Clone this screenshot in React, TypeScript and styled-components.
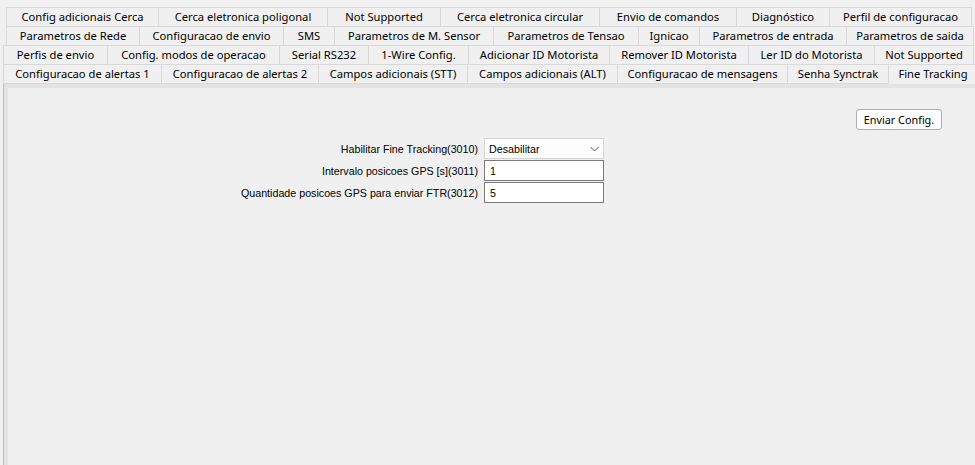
import React from "react";
import styled, { createGlobalStyle } from "styled-components";

const Global = createGlobalStyle`
  html, body { margin: 0; padding: 0; background: #f0f0f0; }
  body { width: 975px; height: 465px; overflow: hidden; }
  * { box-sizing: border-box; }
`;

const Frame = styled.div`
  width: 975px;
  height: 465px;
  display: flex;
  flex-direction: column;
  padding-top: 7px;
  background: #f0f0f0;
`;

const TabRow = styled.div<{ $indent: number }>`
  display: flex;
  height: 20px;
  padding-left: ${(p) => p.$indent}px;
  & + & { margin-top: -1px; }
`;

const Tab = styled.div<{ $w: number; $selected?: boolean }>`
  flex: 0 0 ${(p) => p.$w}px;
  height: 20px;
  margin-left: -1px;
  &:first-child { margin-left: 0; }
  border: 1px solid #d9d9d9;
  border-bottom-color: ${(p) => (p.$selected ? "#f0f0f0" : "#d9d9d9")};
  background: #f0f0f0;
  display: flex;
  align-items: center;
  justify-content: center;
  padding-bottom: 1px;
  font-family: "Segoe UI", "Noto Sans", sans-serif;
  font-size: 11.2px;
  color: #000;
  white-space: nowrap;
  overflow: hidden;
`;

const Panel = styled.div`
  flex: 1;
  margin-left: 3px;
  border-left: 1px solid #bdbdbd;
  display: flex;
`;

const PanelInner = styled.div`
  flex: 1;
  border-left: 4px solid #e3e3e3;
  border-top: 4px solid #e3e3e3;
  background: #f0f0f0;
  display: flex;
  flex-direction: column;
  padding-top: 21px;
`;

const ButtonBar = styled.div`
  display: flex;
  justify-content: flex-end;
  padding-right: 33px;
`;

const Button = styled.button`
  width: 86px;
  height: 21px;
  padding: 0;
  border: 1px solid #adadad;
  border-radius: 3px;
  background: #fdfdfd;
  font-family: "Segoe UI", "Noto Sans", sans-serif;
  font-size: 10.8px;
  color: #000;
`;

const Form = styled.div`
  margin-top: 8px;
  display: grid;
  grid-template-columns: 470px 120px;
  grid-auto-rows: 21px;
  column-gap: 6px;
  row-gap: 1px;
`;

const Label = styled.label`
  display: flex;
  align-items: center;
  justify-content: flex-end;
  font-family: "Liberation Sans", Arial, sans-serif;
  font-size: 10.7px;
  color: #000;
  white-space: nowrap;
`;

const Combo = styled.div`
  display: flex;
  align-items: center;
  justify-content: space-between;
  border: 1px solid #d4d4d4;
  background: #fdfdfd;
  padding: 0 4px 0 4px;
  font-family: "Liberation Sans", Arial, sans-serif;
  font-size: 10.7px;
  color: #000;
`;

const Field = styled.div`
  display: flex;
  align-items: center;
  border: 1px solid #7a7a7a;
  background: #fff;
  padding: 0 5px;
  font-family: "Liberation Sans", Arial, sans-serif;
  font-size: 10.7px;
  color: #000;
`;

type TabDef = { label: string; w: number; selected?: boolean };

const rows: { indent: number; tabs: TabDef[] }[] = [
  {
    indent: 6,
    tabs: [
      { label: "Config adicionais Cerca", w: 153 },
      { label: "Cerca eletronica poligonal", w: 170 },
      { label: "Not Supported", w: 114 },
      { label: "Cerca eletronica circular", w: 160 },
      { label: "Envio de comandos", w: 138 },
      { label: "Diagnóstico", w: 94 },
      { label: "Perfil de configuracao", w: 143 },
    ],
  },
  {
    indent: 6,
    tabs: [
      { label: "Parametros de Rede", w: 134 },
      { label: "Configuracao de envio", w: 145 },
      { label: "SMS", w: 52 },
      { label: "Parametros de M. Sensor", w: 160 },
      { label: "Parametros de Tensao", w: 146 },
      { label: "Ignicao", w: 62 },
      { label: "Parametros de entrada", w: 148 },
      { label: "Parametros de saida", w: 128 },
    ],
  },
  {
    indent: 3,
    tabs: [
      { label: "Perfis de envio", w: 105 },
      { label: "Config. modos de operacao", w: 173 },
      { label: "Serial RS232", w: 90 },
      { label: "1-Wire Config.", w: 101 },
      { label: "Adicionar ID Motorista", w: 142 },
      { label: "Remover ID Motorista", w: 140 },
      { label: "Ler ID do Motorista", w: 127 },
      { label: "Not Supported", w: 100 },
    ],
  },
  {
    indent: 3,
    tabs: [
      { label: "Configuracao de alertas 1", w: 159 },
      { label: "Configuracao de alertas 2", w: 158 },
      { label: "Campos adicionais (STT)", w: 150 },
      { label: "Campos adicionais (ALT)", w: 151 },
      { label: "Configuracao de mensagens", w: 171 },
      { label: "Senha Synctrak", w: 102 },
      { label: "Fine Tracking", w: 90, selected: true },
    ],
  },
];

const Chevron = () => (
  <svg width="9" height="6" viewBox="0 0 9 6">
    <path d="M0.5 1 L4.5 5 L8.5 1" fill="none" stroke="#5a5a5a" strokeWidth="1" />
  </svg>
);

export default function App() {
  return (
    <>
      <Global />
      <Frame>
        {rows.map((r, i) => (
          <TabRow key={i} $indent={r.indent}>
            {r.tabs.map((t) => (
              <Tab key={t.label} $w={t.w} $selected={t.selected}>
                {t.label}
              </Tab>
            ))}
          </TabRow>
        ))}
        <Panel>
          <PanelInner>
            <ButtonBar>
              <Button>Enviar Config.</Button>
            </ButtonBar>
            <Form>
              <Label>Habilitar Fine Tracking(3010)</Label>
              <Combo>
                <span>Desabilitar</span>
                <Chevron />
              </Combo>
              <Label>Intervalo posicoes GPS [s](3011)</Label>
              <Field>1</Field>
              <Label>Quantidade posicoes GPS para enviar FTR(3012)</Label>
              <Field>5</Field>
            </Form>
          </PanelInner>
        </Panel>
      </Frame>
    </>
  );
}
